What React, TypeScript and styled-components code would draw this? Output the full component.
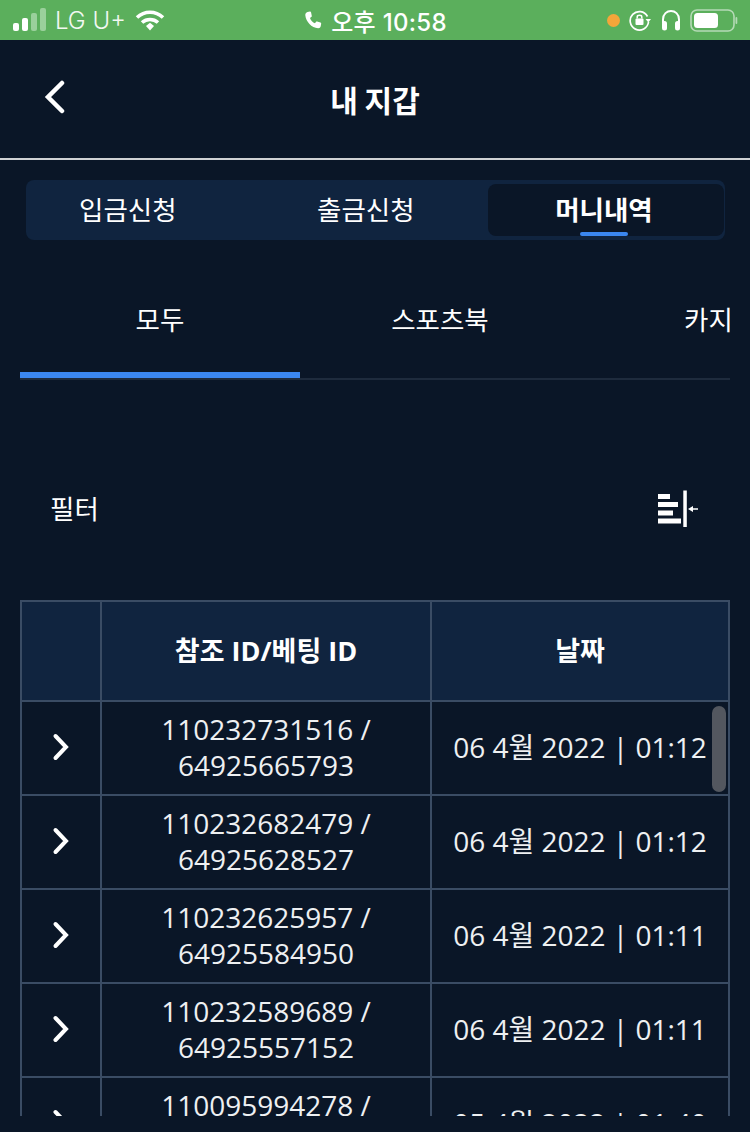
import React from 'react'
import styled, { createGlobalStyle } from 'styled-components'

const GlobalStyle = createGlobalStyle`
  html, body {
    margin: 0;
    padding: 0;
    background: #0a1627;
  }
  * {
    box-sizing: border-box;
  }
`

const Page = styled.div`
  width: 750px;
  height: 1132px;
  overflow: hidden;
  background: #0a1627;
  color: #fff;
  font-family: 'Open Sans', 'Noto Sans CJK KR', sans-serif;
`

const StatusBar = styled.div`
  height: 40px;
  background: #5baf5c;
  display: grid;
  grid-template-columns: 1fr auto 1fr;
  align-items: center;
  padding: 0 12px 0 13px;
  font-family: 'Inter', 'Noto Sans CJK KR', sans-serif;
`

const StatusGroup = styled.div<{ $end?: boolean }>`
  display: flex;
  align-items: center;
  justify-content: ${(p) => (p.$end ? 'flex-end' : 'flex-start')};
`

const Carrier = styled.span`
  font-size: 24px;
  font-weight: 300;
  margin: 0 9px 0 8px;
  color: #f2f8f2;
`

const Clock = styled.span`
  font-size: 24px;
  font-weight: 500;
  margin-left: 9px;
  letter-spacing: 0.3px;
`

const OrangeDot = styled.span`
  width: 13px;
  height: 13px;
  border-radius: 50%;
  background: #f4a63a;
  margin-right: 9px;
`

const Nav = styled.header`
  height: 120px;
  border-bottom: 2px solid #d0d2d4;
  display: flex;
  align-items: center;
  position: relative;
  justify-content: center;
`

const BackButton = styled.div`
  position: absolute;
  left: 44px;
  top: 40px;
  width: 22px;
  height: 34px;
`

const Title = styled.h1`
  margin: 0;
  font-size: 30px;
  font-weight: 700;
  font-family: 'Noto Sans CJK KR', sans-serif;
`

const MainTabs = styled.div`
  margin: 20px 25px 0 26px;
  height: 60px;
  background: #10243f;
  border-radius: 8px;
  padding: 4px 1px 4px 4px;
  display: grid;
  grid-template-columns: 238px 220px 1fr;
`

const MainTab = styled.div<{ $active?: boolean }>`
  position: relative;
  display: flex;
  align-items: center;
  justify-content: ${(p) => (p.$active ? 'center' : 'flex-start')};
  padding: ${(p) => (p.$active ? '0 4px 4px 0' : '0 0 4px 49px')};
  font-family: 'Noto Sans CJK KR', sans-serif;
  font-size: 26.5px;
  font-weight: ${(p) => (p.$active ? 700 : 400)};
  background: ${(p) => (p.$active ? '#0a1627' : 'transparent')};
  border-radius: 8px;
`

const Indicator = styled.span`
  position: absolute;
  left: 92px;
  bottom: 0;
  width: 48px;
  height: 4px;
  border-radius: 2px;
  background: #3b87f0;
`

const SubTabs = styled.div`
  margin: 20px 20px 0;
  height: 120px;
  display: flex;
  overflow: hidden;
  border-bottom: 2px solid #1e2b3d;
`

const SubTab = styled.div<{ $active?: boolean }>`
  flex: 0 0 280px;
  height: 118px;
  display: flex;
  align-items: center;
  justify-content: center;
  padding-top: 4px;
  font-family: 'Noto Sans CJK KR', sans-serif;
  font-size: 26.5px;
  border-bottom: 6px solid ${(p) => (p.$active ? '#3b87f0' : 'transparent')};
`

const SubTabCut = styled(SubTab)`
  justify-content: flex-start;
  padding-left: 104px;
  white-space: nowrap;
`

const FilterRow = styled.div`
  height: 220px;
  display: flex;
  align-items: center;
  justify-content: space-between;
  padding: 38px 51px 0 50px;
  font-family: 'Noto Sans CJK KR', sans-serif;
  font-size: 26.5px;
`

const FilterLabel = styled.span`
  margin-bottom: 4px;
`

const TableWrap = styled.div`
  position: relative;
  margin: 0 20px;
  height: 516px;
  overflow: hidden;
  border: solid #3a4c64;
  border-width: 2px 2px 0;
`

const Row = styled.div<{ $head?: boolean }>`
  display: grid;
  grid-template-columns: 78px 330px 1fr;
  height: ${(p) => (p.$head ? '100px' : '94px')};
  border-bottom: 2px solid #3a4c64;
  background: ${(p) => (p.$head ? '#10243f' : 'transparent')};
`

const Cell = styled.div<{ $head?: boolean }>`
  display: flex;
  align-items: center;
  justify-content: center;
  text-align: center;
  padding-bottom: ${(p) => (p.$head ? '0' : '2px')};
  font-size: ${(p) => (p.$head ? '27px' : '28px')};
  line-height: 36px;
  font-weight: ${(p) => (p.$head ? 700 : 400)};
  color: ${(p) => (p.$head ? '#fff' : '#eef0f2')};
  & + & {
    border-left: 2px solid #3a4c64;
  }
`

const Scrollbar = styled.div`
  position: absolute;
  right: 2px;
  top: 104px;
  width: 14px;
  height: 86px;
  border-radius: 7px;
  background: #53575f;
`

const Chevron = () => (
  <svg width="18" height="28" viewBox="0 0 18 28" fill="none">
    <path d="M3.500 3L14 14L3.500 25" stroke="#fff" strokeWidth="4" strokeLinecap="round" strokeLinejoin="miter" />
  </svg>
)

const SignalIcon = () => (
  <svg width="34" height="26" viewBox="0 0 34 26">
    <rect x="0" y="16" width="6" height="8" rx="2" fill="#fff" />
    <rect x="9" y="11" width="6" height="13" rx="2" fill="#fff" />
    <rect x="18" y="6" width="6" height="18" rx="2" fill="#9ad09b" />
    <rect x="27" y="1" width="6" height="23" rx="2" fill="#9ad09b" />
  </svg>
)

const WifiIcon = () => (
  <svg width="30" height="24" viewBox="0 0 30 24" fill="none">
    <path d="M2 9.500C9.500 2.500 20.500 2.500 28 9.500" stroke="#fff" strokeWidth="3.600" />
    <path d="M7 14.500C11.500 10.500 18.500 10.500 23 14.500" stroke="#fff" strokeWidth="3.600" />
    <path d="M11 18L15 14.800L19 18L15 22.500Z" fill="#fff" />
  </svg>
)

const PhoneIcon = () => (
  <svg width="18" height="18" viewBox="0 0 18 18">
    <path
      d="M3.500 1L6 .6C6.600.6 7 1 7.100 1.400L7.800 5C7.800 5.500 7.600 5.900 7.200 6.100L6 6.900C6.800 9.300 8.700 11.300 11 12.200L11.900 10.900C12.200 10.500 12.700 10.400 13.100 10.500L16.500 11.500C17 11.700 17.300 12.200 17.200 12.700L16.700 15.300C16.500 16.500 15.400 17.400 14.100 17.300C7.500 16.600 2 10.800 1.300 4.200C1.200 2.700 2.100 1.400 3.500 1Z"
      fill="#fff"
    />
  </svg>
)

const RotationLockIcon = () => (
  <svg width="22" height="22" viewBox="0 0 22 22" fill="none" style={{ marginRight: 10 }}>
    <path d="M18.500 7.500A9.200 9.200 0 1 0 19.500 13" stroke="#fff" strokeWidth="1.700" />
    <path d="M16.500 10H22L19.300 13.500Z" fill="#fff" />
    <rect x="6.500" y="9.500" width="8" height="6.500" rx="1" fill="#fff" />
    <path d="M8.200 9.500V8C8.200 5.800 12.800 5.800 12.800 8V9.500" stroke="#fff" strokeWidth="1.500" />
  </svg>
)

const HeadphonesIcon = () => (
  <svg width="20" height="22" viewBox="0 0 20 22" fill="none" style={{ marginRight: 9 }}>
    <path d="M2 14V10.500C2 -0.800 18 -0.800 18 10.500V14" stroke="#fff" strokeWidth="2" />
    <rect x="1" y="12" width="5" height="9.500" rx="2.500" fill="#fff" />
    <rect x="14" y="12" width="5" height="9.500" rx="2.500" fill="#fff" />
  </svg>
)

const BatteryIcon = () => (
  <svg width="48" height="24" viewBox="0 0 48 24" fill="none">
    <rect x="1" y="2" width="43" height="21" rx="6" stroke="#b5dab6" strokeWidth="1.600" />
    <rect x="4" y="5" width="24" height="15" rx="3.500" fill="#fff" />
    <rect x="45.500" y="9" width="1.800" height="7" rx="0.900" fill="#b5dab6" />
  </svg>
)

const FilterIcon = () => (
  <svg width="42" height="38" viewBox="0 0 42 38">
    <rect x="1" y="4" width="12" height="5" fill="#fff" />
    <rect x="1" y="12" width="20" height="5" fill="#fff" />
    <rect x="1" y="20.500" width="15" height="5" fill="#fff" />
    <rect x="1" y="28.500" width="23" height="5" fill="#fff" />
    <rect x="26.300" y="0.500" width="3.500" height="36.500" fill="#fff" />
    <path d="M41 18.200H36V16L31 19L36 22V19.800H41Z" fill="#fff" />
  </svg>
)

const rows = [
  { id: '110232731516 /', bet: '64925665793', date: '06 4월 2022 | 01:12' },
  { id: '110232682479 /', bet: '64925628527', date: '06 4월 2022 | 01:12' },
  { id: '110232625957 /', bet: '64925584950', date: '06 4월 2022 | 01:11' },
  { id: '110232589689 /', bet: '64925557152', date: '06 4월 2022 | 01:11' },
  { id: '110095994278 /', bet: '64842106315', date: '05 4월 2022 | 01:40' },
]

const App: React.FC = () => {
  return (
    <Page>
      <GlobalStyle />
      <StatusBar>
        <StatusGroup>
          <SignalIcon />
          <Carrier>LG U+</Carrier>
          <WifiIcon />
        </StatusGroup>
        <StatusGroup>
          <PhoneIcon />
          <Clock>오후 10:58</Clock>
        </StatusGroup>
        <StatusGroup $end>
          <OrangeDot />
          <RotationLockIcon />
          <HeadphonesIcon />
          <BatteryIcon />
        </StatusGroup>
      </StatusBar>

      <Nav>
        <BackButton>
          <svg width="22" height="34" viewBox="0 0 22 34" fill="none">
            <path d="M18 3L4 17L18 31" stroke="#fff" strokeWidth="4.500" strokeLinecap="round" strokeLinejoin="miter" />
          </svg>
        </BackButton>
        <Title>내 지갑</Title>
      </Nav>

      <MainTabs>
        <MainTab>입금신청</MainTab>
        <MainTab>출금신청</MainTab>
        <MainTab $active>
          머니내역
          <Indicator />
        </MainTab>
      </MainTabs>

      <SubTabs>
        <SubTab $active>모두</SubTab>
        <SubTab>스포츠북</SubTab>
        <SubTabCut>카지노</SubTabCut>
      </SubTabs>

      <FilterRow>
        <FilterLabel>필터</FilterLabel>
        <FilterIcon />
      </FilterRow>

      <TableWrap>
        <Row $head>
          <Cell $head />
          <Cell $head>참조 ID/베팅 ID</Cell>
          <Cell $head>날짜</Cell>
        </Row>
        {rows.map((row) => (
          <Row key={row.id}>
            <Cell>
              <Chevron />
            </Cell>
            <Cell>
              {row.id}
              <br />
              {row.bet}
            </Cell>
            <Cell>{row.date}</Cell>
          </Row>
        ))}
        <Scrollbar />
      </TableWrap>
    </Page>
  )
}

export default App
